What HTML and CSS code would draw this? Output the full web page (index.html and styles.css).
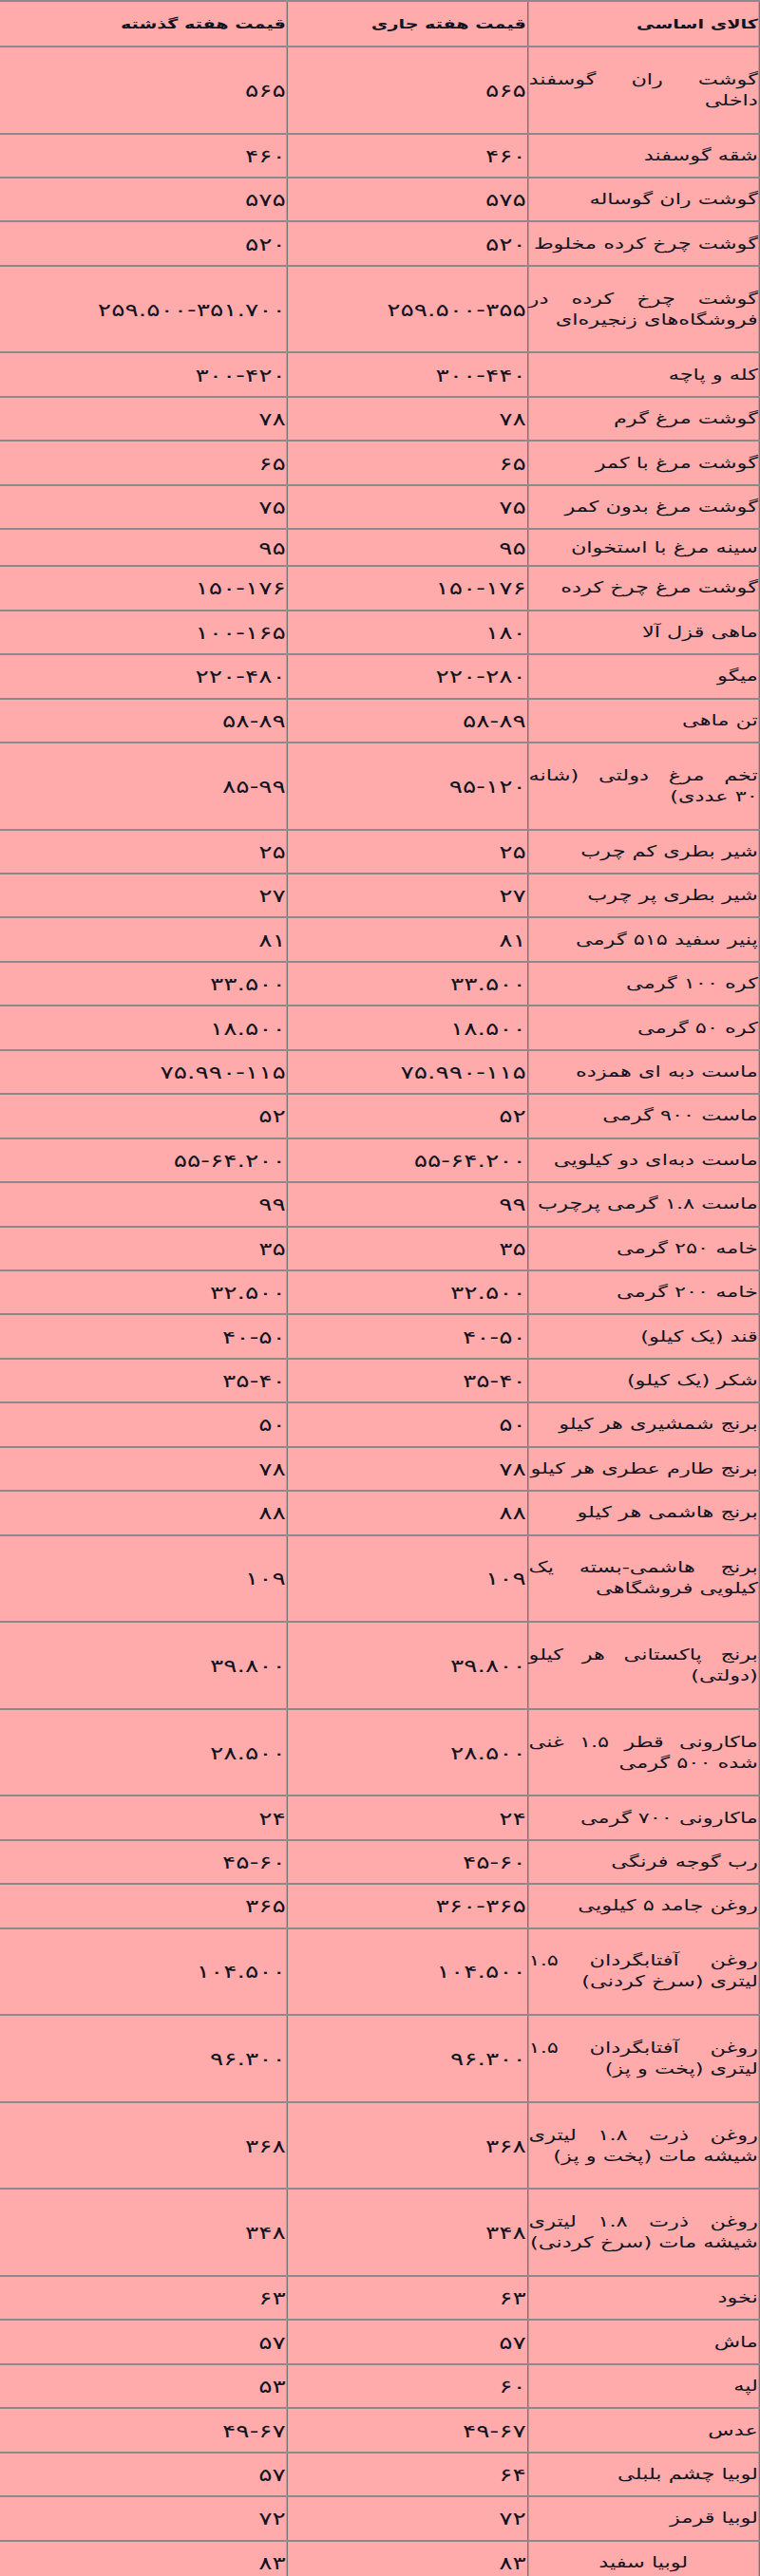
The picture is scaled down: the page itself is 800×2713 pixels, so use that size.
FILE: index.html
```html
<!DOCTYPE html>
<html lang="fa" dir="rtl">
<head>
<meta charset="utf-8">
<title>قیمت کالاهای اساسی</title>
<link rel="stylesheet" href="styles.css">
</head>
<body>
<table class="prices">
<colgroup><col class="c-name"><col class="c-now"><col class="c-prev"></colgroup>
<thead>
<tr class="h"><th>کالای اساسی</th><th>قیمت هفته جاری</th><th>قیمت هفته گذشته</th></tr>
</thead>
<tbody>
<tr class="d d1"><td><span class="l1">گوشت ران گوسفند</span>داخلی</td><td>۵۶۵</td><td>۵۶۵</td></tr>
<tr class="s"><td>شقه گوسفند</td><td>۴۶۰</td><td>۴۶۰</td></tr>
<tr class="s"><td>گوشت ران گوساله</td><td>۵۷۵</td><td>۵۷۵</td></tr>
<tr class="s"><td>گوشت چرخ کرده مخلوط</td><td>۵۲۰</td><td>۵۲۰</td></tr>
<tr class="d"><td><span class="l1">گوشت چرخ کرده در</span>فروشگاه‌های زنجیره‌ای</td><td>۲۵۹.۵۰۰-۳۵۵</td><td>۲۵۹.۵۰۰-۳۵۱.۷۰۰</td></tr>
<tr class="s"><td>کله و پاچه</td><td>۳۰۰-۴۴۰</td><td>۳۰۰-۴۲۰</td></tr>
<tr class="s"><td>گوشت مرغ گرم</td><td>۷۸</td><td>۷۸</td></tr>
<tr class="s"><td>گوشت مرغ با کمر</td><td>۶۵</td><td>۶۵</td></tr>
<tr class="s"><td>گوشت مرغ بدون کمر</td><td>۷۵</td><td>۷۵</td></tr>
<tr class="x"><td>سینه مرغ با استخوان</td><td>۹۵</td><td>۹۵</td></tr>
<tr class="s"><td>گوشت مرغ چرخ کرده</td><td>۱۵۰-۱۷۶</td><td>۱۵۰-۱۷۶</td></tr>
<tr class="s"><td>ماهی قزل آلا</td><td>۱۸۰</td><td>۱۰۰-۱۶۵</td></tr>
<tr class="s"><td>میگو</td><td>۲۲۰-۲۸۰</td><td>۲۲۰-۴۸۰</td></tr>
<tr class="s"><td>تن ماهی</td><td>۵۸-۸۹</td><td>۵۸-۸۹</td></tr>
<tr class="d"><td><span class="l1">تخم مرغ دولتی (شانه</span>۳۰ عددی)</td><td>۹۵-۱۲۰</td><td>۸۵-۹۹</td></tr>
<tr class="s"><td>شیر بطری کم چرب</td><td>۲۵</td><td>۲۵</td></tr>
<tr class="s"><td>شیر بطری پر چرب</td><td>۲۷</td><td>۲۷</td></tr>
<tr class="s"><td>پنیر سفید ۵۱۵ گرمی</td><td>۸۱</td><td>۸۱</td></tr>
<tr class="s"><td>کره ۱۰۰ گرمی</td><td>۳۳.۵۰۰</td><td>۳۳.۵۰۰</td></tr>
<tr class="s"><td>کره ۵۰ گرمی</td><td>۱۸.۵۰۰</td><td>۱۸.۵۰۰</td></tr>
<tr class="s"><td>ماست دبه ای همزده</td><td>۷۵.۹۹۰-۱۱۵</td><td>۷۵.۹۹۰-۱۱۵</td></tr>
<tr class="s"><td>ماست ۹۰۰ گرمی</td><td>۵۲</td><td>۵۲</td></tr>
<tr class="s"><td>ماست دبه‌ای دو کیلویی</td><td>۵۵-۶۴.۲۰۰</td><td>۵۵-۶۴.۲۰۰</td></tr>
<tr class="s"><td>ماست ۱.۸ گرمی پرچرب</td><td>۹۹</td><td>۹۹</td></tr>
<tr class="s"><td>خامه ۲۵۰ گرمی</td><td>۳۵</td><td>۳۵</td></tr>
<tr class="s"><td>خامه ۲۰۰ گرمی</td><td>۳۲.۵۰۰</td><td>۳۲.۵۰۰</td></tr>
<tr class="s"><td>قند (یک کیلو)</td><td>۴۰-۵۰</td><td>۴۰-۵۰</td></tr>
<tr class="s"><td>شکر (یک کیلو)</td><td>۳۵-۴۰</td><td>۳۵-۴۰</td></tr>
<tr class="s"><td>برنج شمشیری هر کیلو</td><td>۵۰</td><td>۵۰</td></tr>
<tr class="s"><td>برنج طارم عطری هر کیلو</td><td>۷۸</td><td>۷۸</td></tr>
<tr class="s"><td>برنج هاشمی هر کیلو</td><td>۸۸</td><td>۸۸</td></tr>
<tr class="d"><td><span class="l1">برنج هاشمی-بسته یک</span>کیلویی فروشگاهی</td><td>۱۰۹</td><td>۱۰۹</td></tr>
<tr class="d"><td><span class="l1">برنج پاکستانی هر کیلو</span>(دولتی)</td><td>۳۹.۸۰۰</td><td>۳۹.۸۰۰</td></tr>
<tr class="d"><td><span class="l1">ماکارونی قطر ۱.۵ غنی</span>شده ۵۰۰ گرمی</td><td>۲۸.۵۰۰</td><td>۲۸.۵۰۰</td></tr>
<tr class="s"><td>ماکارونی ۷۰۰ گرمی</td><td>۲۴</td><td>۲۴</td></tr>
<tr class="s"><td>رب گوجه فرنگی</td><td>۴۵-۶۰</td><td>۴۵-۶۰</td></tr>
<tr class="s"><td>روغن جامد ۵ کیلویی</td><td>۳۶۰-۳۶۵</td><td>۳۶۵</td></tr>
<tr class="d"><td><span class="l1">روغن آفتابگردان ۱.۵</span>لیتری (سرخ کردنی)</td><td>۱۰۴.۵۰۰</td><td>۱۰۴.۵۰۰</td></tr>
<tr class="d"><td><span class="l1">روغن آفتابگردان ۱.۵</span>لیتری (پخت و پز)</td><td>۹۶.۳۰۰</td><td>۹۶.۳۰۰</td></tr>
<tr class="d"><td><span class="l1">روغن ذرت ۱.۸ لیتری</span>شیشه مات (پخت و پز)</td><td>۳۶۸</td><td>۳۶۸</td></tr>
<tr class="d"><td><span class="l1">روغن ذرت ۱.۸ لیتری</span>شیشه مات (سرخ کردنی)</td><td>۳۴۸</td><td>۳۴۸</td></tr>
<tr class="s"><td>نخود</td><td>۶۳</td><td>۶۳</td></tr>
<tr class="s"><td>ماش</td><td>۵۷</td><td>۵۷</td></tr>
<tr class="s"><td>لپه</td><td>۶۰</td><td>۵۳</td></tr>
<tr class="s"><td>عدس</td><td>۴۹-۶۷</td><td>۴۹-۶۷</td></tr>
<tr class="s"><td>لوبیا چشم بلبلی</td><td>۶۴</td><td>۵۷</td></tr>
<tr class="s"><td>لوبیا قرمز</td><td>۷۲</td><td>۷۲</td></tr>
<tr class="s"><td class="center">لوبیا سفید</td><td>۸۳</td><td>۸۳</td></tr>
</tbody>
</table>
</body>
</html>
```

FILE: styles.css
```css
html, body {
  margin: 0;
  padding: 0;
  background: #ffffff;
}

/* The original table is drawn horizontally stretched (1.4x); lay it out at
   800 / 1.4 px and stretch it to the full 800px width. */
.prices {
  width: 571.43px;
  border-collapse: collapse;
  table-layout: fixed;
  direction: rtl;
  transform: scaleX(1.4);
  transform-origin: 100% 0;
  background: #ffabab;
  color: #121220;
  font-family: "DejaVu Sans", sans-serif;
  font-size: 16px;
  line-height: 22px;
}

.c-name { width: 174.29px; }
.c-now { width: 180.71px; }
.c-prev { width: 216.43px; }

.prices th,
.prices td {
  border-top: 2px solid #8a8a8a;
  border-bottom: 2px solid #8a8a8a;
  border-left: 1px solid #747474;
  border-right: 1px solid #747474;
  padding: 0 0.5px;
  text-align: justify;
  vertical-align: middle;
  white-space: nowrap;
}

.prices th {
  font-size: 13.7px;
  font-weight: bold;
}

.prices td + td {
  font-size: 19px;
}

.prices tr > :last-child {
  border-left: none;
}

.prices tr.h { height: 47.7px; }
.prices tr.s { height: 46.44px; }
.prices tr.x { height: 39px; }
.prices tr.d { height: 91.6px; }
.prices tr.d1 { height: 91.9px; }

.l1 {
  display: block;
  white-space: normal;
  text-align: justify;
  text-align-last: justify;
}

.prices td.center {
  text-align: center;
}
```
